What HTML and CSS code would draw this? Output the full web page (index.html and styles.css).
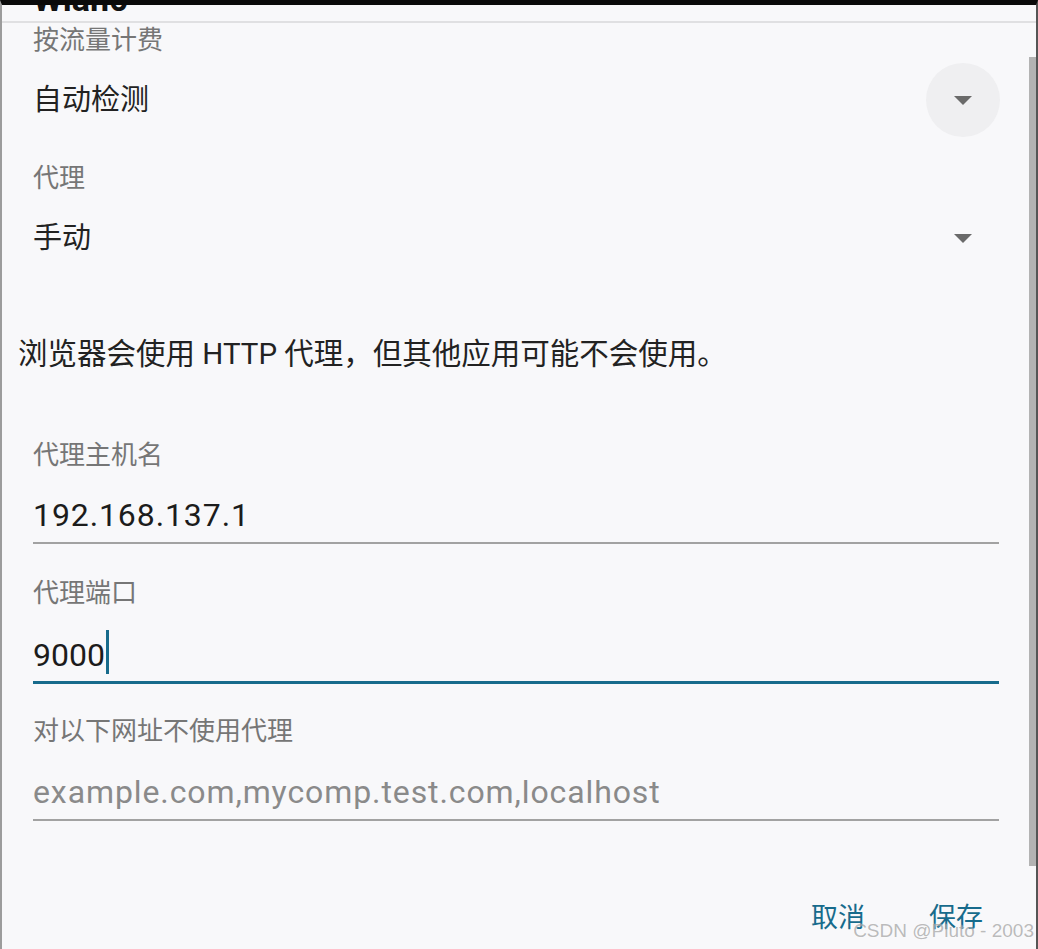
FILE: index.html
```html
<!DOCTYPE html>
<html lang="zh-CN">
<head>
<meta charset="utf-8">
<title>Wlan0</title>
<link rel="stylesheet" href="styles.css">
</head>
<body>
<div class="frame">
  <div class="title-clip"><div class="title">Wlan0</div></div>
  <div class="divider"></div>
  <div class="content">
    <div class="label">按流量计费</div>
    <div class="spinner spinner-main">
      <span class="spin-text">自动检测</span>
      <span class="spin-btn spin-btn-circle">
        <svg width="18" height="9" viewBox="0 0 18 9"><polygon points="0,0 18,0 9,9" fill="#6a6a6a"/></svg>
      </span>
    </div>
    <div class="label label-proxy">代理</div>
    <div class="spinner spinner-small">
      <span class="spin-text">手动</span>
      <span class="spin-btn">
        <svg width="18" height="9" viewBox="0 0 18 9"><polygon points="0,0 18,0 9,9" fill="#6a6a6a"/></svg>
      </span>
    </div>
  </div>
  <div class="hint">浏览器会使用 HTTP 代理，但其他应用可能不会使用。</div>
  <div class="content">
    <div class="label label-host">代理主机名</div>
    <div class="field field-host field-wide">192.168.137.1</div>
    <div class="label label-port">代理端口</div>
    <div class="field field-port field-focused">9000<span class="caret"></span></div>
    <div class="label label-exclude">对以下网址不使用代理</div>
    <div class="field field-exclude field-wide field-placeholder">example.com,mycomp.test.com,localhost</div>
  </div>
  <div class="actions">
    <span class="btn">取消</span>
    <span class="btn">保存</span>
  </div>
  <div class="scrollbar"></div>
  <div class="watermark">CSDN @Pluto - 2003</div>
</div>
</body>
</html>
```

FILE: styles.css
```css
html, body {
  margin: 0;
  padding: 0;
  background: #f8f8fa;
}

.frame {
  position: relative;
  box-sizing: border-box;
  width: 1038px;
  height: 949px;
  overflow: hidden;
  background: #f8f8fa;
  border-top: 5px solid #0a0a0a;
  border-left: 2px solid #9c9c9c;
  border-right: 2px solid #555555;
  font-family: Roboto, "Noto Sans CJK SC", sans-serif;
  color: #212121;
}

.title-clip {
  height: 16px;
  overflow: hidden;
}

.title {
  margin-top: -26px;
  padding-left: 31px;
  font-size: 34px;
  line-height: 40px;
  font-weight: 700;
  color: #111111;
}

.divider {
  height: 2px;
  background: #e0e0e2;
}

.content {
  padding-left: 31px;
  padding-right: 37px;
}

.label {
  height: 34px;
  font-size: 26px;
  line-height: 34px;
  color: #767676;
}

.label-proxy { margin-top: 18px; }
.label-host { margin-top: 64px; }
.label-port { margin-top: 32px; }
.label-exclude { margin-top: 30px; }

.spinner {
  display: flex;
  align-items: center;
  justify-content: space-between;
}

.spinner-main { height: 86px; }
.spinner-small { height: 46px; margin-top: 20px; }

.spin-text {
  font-size: 29px;
  line-height: 40px;
  color: #222222;
}

.spin-btn {
  display: flex;
  align-items: center;
  justify-content: center;
  width: 74px;
  margin-right: -1px;
}

.spin-btn-circle {
  height: 74px;
  border-radius: 50%;
  background: #efeff1;
}

.spin-btn svg { display: block; margin-top: 1px; }

.hint {
  margin-top: 73px;
  padding-left: 16px;
  font-size: 29.5px;
  line-height: 40px;
  color: #222222;
}

.field {
  font-size: 32px;
  line-height: 40px;
  padding-bottom: 7px;
  border-bottom: 2px solid #a2a2a2;
  color: #1c1c1c;
  white-space: nowrap;
}

.field-wide { letter-spacing: 0.9px; }

.field-host { margin-top: 23px; }
.field-port { margin-top: 25px; }
.field-exclude { margin-top: 24px; }

.field-focused {
  padding-bottom: 6px;
  border-bottom: 3px solid #176b8c;
}

.field-placeholder { color: #8a8a8a; }

.caret {
  display: inline-block;
  vertical-align: top;
  width: 3px;
  height: 44px;
  margin-top: -5px;
  margin-left: 1px;
  background: #176b8c;
}

.actions {
  display: flex;
  justify-content: flex-end;
  gap: 64px;
  margin-top: 77px;
  padding-right: 53px;
}

.btn {
  font-size: 27px;
  line-height: 40px;
  color: #176b8c;
}

.scrollbar {
  position: absolute;
  top: 52px;
  right: 0;
  width: 7px;
  height: 809px;
  background: #b3b3b3;
}

.watermark {
  position: absolute;
  right: 2px;
  bottom: 6px;
  font-family: "Liberation Sans", Arial, sans-serif;
  font-size: 19px;
  line-height: 24px;
  color: rgba(150, 150, 150, 0.65);
  text-shadow: 0 0 2px rgba(255, 255, 255, 0.6);
  white-space: nowrap;
}
```
